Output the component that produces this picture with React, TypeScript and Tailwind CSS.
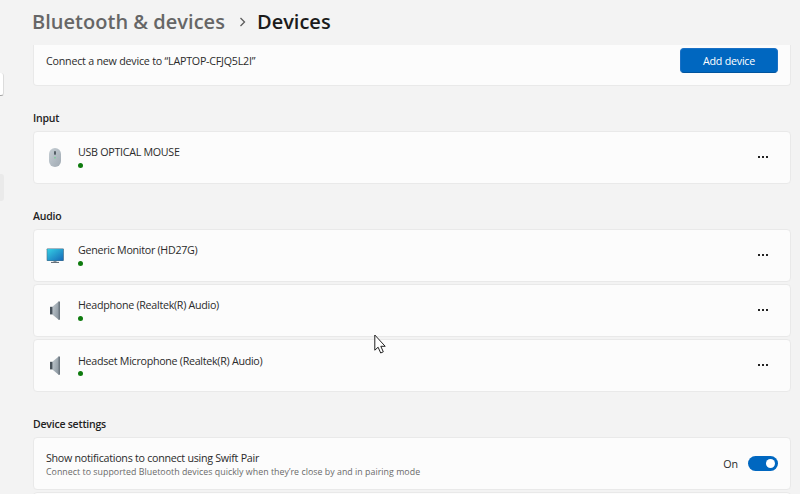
import { useState, type ReactNode } from "react"

function MouseIcon() {
  return (
    <svg width="18" height="22" viewBox="0 0 18 22">
      <defs>
        <linearGradient id="mouse-body" x1="0" y1="0" x2="1" y2="1">
          <stop offset="0" stopColor="#c6ced4" />
          <stop offset="1" stopColor="#a0aab3" />
        </linearGradient>
      </defs>
      <rect x="3" y="1" width="12" height="19" rx="6" fill="url(#mouse-body)" />
      <rect x="8.1" y="4" width="1.8" height="3.8" rx="0.9" fill="#4b545c" />
      <circle cx="9" cy="10.7" r="0.9" fill="#7fcf9c" />
    </svg>
  )
}

function MonitorIcon() {
  return (
    <svg width="18" height="22" viewBox="0 0 18 22">
      <defs>
        <linearGradient id="monitor-screen" x1="0" y1="0" x2="1" y2="1">
          <stop offset="0" stopColor="#35cfe4" />
          <stop offset="1" stopColor="#1569b8" />
        </linearGradient>
      </defs>
      <path d="M7.5 15.5h3v2.2h-3z" fill="#8b949b" />
      <path d="M5 16.9h8v1.1H5z" fill="#65707a" />
      <rect x="0.7" y="3.4" width="17.1" height="12.6" rx="0.8" fill="#4b6f86" />
      <rect x="1.3" y="4" width="15.9" height="11.4" rx="0.4" fill="url(#monitor-screen)" />
    </svg>
  )
}

function SpeakerIcon() {
  return (
    <svg width="18" height="22" viewBox="0 0 18 22">
      <defs>
        <linearGradient id="speaker-cone" x1="0" y1="0" x2="1" y2="0.4">
          <stop offset="0" stopColor="#c2cad0" />
          <stop offset="1" stopColor="#929da6" />
        </linearGradient>
      </defs>
      <path d="M6 7L12.7 1.5v18.2L6 14.2z" fill="url(#speaker-cone)" />
      <path d="M12.3 1.5h1.7v18.3h-1.7z" fill="#6c7780" />
      <path d="M4 6.8h2.4v7.6H4z" fill="#48525b" />
    </svg>
  )
}

function Cursor() {
  return (
    <svg className="absolute left-[374px] top-[334px]" width="13" height="21" viewBox="0 0 13 21">
      <path
        d="M0.8 1v15.2l3.3-3 2.6 5.8 2.6-1.2-2.5-5.5h4.4z"
        fill="#fff"
        stroke="#222"
        strokeWidth="1"
        strokeLinejoin="round"
      />
    </svg>
  )
}

function Card({ children }: { children: ReactNode }) {
  return (
    <div className="flex h-[53px] shrink-0 items-center rounded border border-[#e9e9e9] bg-[#fcfcfc] px-3">
      {children}
    </div>
  )
}

function SectionTitle({ children }: { children: ReactNode }) {
  return <h2 className="h-[26px] text-[10.5px] leading-[26px] font-semibold tracking-[-0.22px] text-[#222]">{children}</h2>
}

type Device = { name: string; icon: ReactNode; spacing: string }

const inputs: Device[] = [
  { name: "USB OPTICAL MOUSE", icon: <MouseIcon />, spacing: "-mt-px mb-1" },
]

const audio: Device[] = [
  { name: "Generic Monitor (HD27G)", icon: <MonitorIcon />, spacing: "-mt-px mb-1" },
  { name: "Headphone (Realtek(R) Audio)", icon: <SpeakerIcon />, spacing: "-mt-px mb-1" },
  { name: "Headset Microphone (Realtek(R) Audio)", icon: <SpeakerIcon />, spacing: "mb-[3px]" },
]

function DeviceCard({ device }: { device: Device }) {
  return (
    <Card>
      <div className="w-8 shrink-0">{device.icon}</div>
      <div className="flex-1 pb-px">
        <div className={`text-[10.7px] leading-[14px] tracking-[-0.28px] whitespace-nowrap ${device.spacing}`}>
          {device.name}
        </div>
        <div className="h-[5px] w-[5px] rounded-full bg-[#0f7b0f]" />
      </div>
      <button aria-label="More options" className="flex w-[30px] justify-center gap-[2px] pb-px">
        <span className="h-[2px] w-[2px] bg-[#222]" />
        <span className="h-[2px] w-[2px] bg-[#222]" />
        <span className="h-[2px] w-[2px] bg-[#222]" />
      </button>
    </Card>
  )
}

export default function App() {
  const [swiftPair, setSwiftPair] = useState(true)

  return (
    <div className="relative flex h-[494px] w-[800px] overflow-hidden bg-[#f3f3f3] font-['Open_Sans','Noto_Sans',sans-serif] text-[#2b2b2b]">
      {/* right edge of the navigation pane */}
      <aside className="w-[33px] shrink-0 pt-[73px]">
        <div className="h-[23px] w-1 rounded-r-[3px] border-r border-b border-[#dcdcdc] border-b-[#a5a5a5] bg-white" />
        <div className="mt-[78px] h-[27px] w-1 rounded-r-[3px] bg-[#eaeaea]" />
      </aside>

      <main className="flex w-[758px] shrink-0 flex-col">
        <header className="flex h-[45px] shrink-0 items-center pb-[2px] text-[20px] leading-[27px] font-semibold whitespace-nowrap">
          <span className="-ml-[1px] w-[207px] tracking-[0.02px] text-[#666]">Bluetooth &amp; devices</span>
          <svg className="mr-[11px] shrink-0" width="7" height="10" viewBox="0 0 7 10">
            <path d="M1.5 1l4 4-4 4" fill="none" stroke="#5c5c5c" strokeWidth="1.3" />
          </svg>
          <span className="text-[#1b1b1b]">Devices</span>
        </header>

        <div className="flex h-[41px] shrink-0 items-start justify-between rounded-b border border-t-0 border-[#e9e9e9] bg-[#fcfcfc] px-3 pt-[3px]">
          <span className="pt-[6px] text-[10.7px] leading-[14px] tracking-[-0.22px]">Connect a new device to “LAPTOP-CFJQ5L2I”</span>
          <button className="h-[25px] w-[98px] rounded border border-[#1a70c5] border-b-[#00549e] bg-[#0067c0] text-[10.7px] leading-[14px] tracking-[-0.22px] text-white">
            Add device
          </button>
        </div>

        <section className="mt-[19px]">
          <SectionTitle>Input</SectionTitle>
          {inputs.map((d) => (
            <DeviceCard key={d.name} device={d} />
          ))}
        </section>

        <section className="mt-[19px]">
          <SectionTitle>Audio</SectionTitle>
          <div className="flex flex-col gap-[2px]">
            {audio.map((d) => (
              <DeviceCard key={d.name} device={d} />
            ))}
          </div>
        </section>

        <section className="mt-[19px]">
          <SectionTitle>Device settings</SectionTitle>
          <div className="flex flex-col gap-[2px]">
            <Card>
              <div className="flex-1 pt-[2px] whitespace-nowrap">
                <div className="text-[10.7px] leading-[14px] tracking-[-0.27px]">Show notifications to connect using Swift Pair</div>
                <div className="text-[8.8px] leading-[14px] tracking-[0.04px] text-[#6a6a6a]">
                  Connect to supported Bluetooth devices quickly when they’re close by and in pairing mode
                </div>
              </div>
              <span className="mr-[10px] pt-px text-[10.7px] tracking-[-0.1px]">{swiftPair ? "On" : "Off"}</span>
              <button
                role="switch"
                aria-checked={swiftPair}
                aria-label="Swift Pair notifications"
                onClick={() => setSwiftPair(!swiftPair)}
                className={`flex h-[15px] w-[30px] items-center rounded-full px-[3px] ${swiftPair ? "justify-end bg-[#0067c0]" : "justify-start bg-[#8a8a8a]"}`}
              >
                <span className="h-[9px] w-[9px] rounded-full bg-white" />
              </button>
            </Card>
            <Card>{null}</Card>
          </div>
        </section>
      </main>

      <Cursor />
    </div>
  )
}
